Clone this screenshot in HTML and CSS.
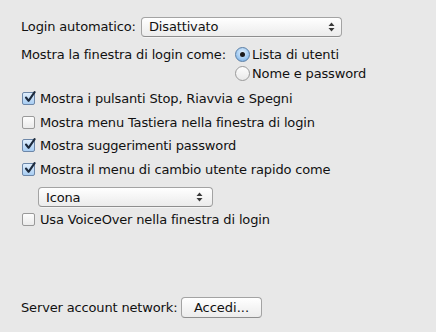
FILE: index.html
```html
<!DOCTYPE html>
<html>
<head>
<meta charset="utf-8">
<link rel="stylesheet" href="styles.css">
</head>
<body>
<div class="panel">
  <div class="row1">
    <span class="label1">Login automatico:</span>
    <div class="popup wide"><span>Disattivato</span><span class="arrows"><svg width="7" height="10" viewBox="0 0 7 10"><path d="M3.5 0.5 L6.5 4 L0.5 4 Z M0.5 6 L6.5 6 L3.5 9.5 Z" fill="#3a3a3a"/></svg></span></div>
  </div>
  <div class="row2">
    <span class="label2">Mostra la finestra di login come:</span>
    <div class="radios">
      <div class="radio-item"><span class="radio on"><span class="dot"></span></span><span>Lista di utenti</span></div>
      <div class="radio-item"><span class="radio"></span><span>Nome e password</span></div>
    </div>
  </div>
  <div class="checks">
    <div class="check-item"><span class="box on"><svg width="13" height="13" viewBox="0 0 13 13"><path d="M3 6.5 L5.6 9.8 L11.6 1.2" fill="none" stroke="#1c2a3c" stroke-width="2.1" stroke-linecap="round" stroke-linejoin="round"/></svg></span><span>Mostra i pulsanti Stop, Riavvia e Spegni</span></div>
    <div class="check-item"><span class="box"></span><span>Mostra menu Tastiera nella finestra di login</span></div>
    <div class="check-item"><span class="box on"><svg width="13" height="13" viewBox="0 0 13 13"><path d="M3 6.5 L5.6 9.8 L11.6 1.2" fill="none" stroke="#1c2a3c" stroke-width="2.1" stroke-linecap="round" stroke-linejoin="round"/></svg></span><span>Mostra suggerimenti password</span></div>
    <div class="check-item"><span class="box on"><svg width="13" height="13" viewBox="0 0 13 13"><path d="M3 6.5 L5.6 9.8 L11.6 1.2" fill="none" stroke="#1c2a3c" stroke-width="2.1" stroke-linecap="round" stroke-linejoin="round"/></svg></span><span>Mostra il menu di cambio utente rapido come</span></div>
    <div class="popup small"><span>Icona</span><span class="arrows"><svg width="7" height="10" viewBox="0 0 7 10"><path d="M3.5 0.5 L6.5 4 L0.5 4 Z M0.5 6 L6.5 6 L3.5 9.5 Z" fill="#3a3a3a"/></svg></span></div>
    <div class="check-item"><span class="box"></span><span>Usa VoiceOver nella finestra di login</span></div>
  </div>
  <div class="row-server">
    <span class="label3">Server account network:</span>
    <button class="btn">Accedi...</button>
  </div>
</div>
</body>
</html>
```
FILE: styles.css
```css
html, body {
  margin: 0;
  padding: 0;
  background: #e8e8e8;
}
body {
  font-family: "DejaVu Sans", "Liberation Sans", sans-serif;
  font-size: 13px;
  letter-spacing: -0.15px;
  color: #111;
  width: 436px;
  height: 332px;
  overflow: hidden;
}
.panel {
  padding: 16px 0 0 21px;
}
.row1 {
  display: flex;
  align-items: center;
  height: 21px;
}
.label1 {
  width: 120px;
  flex: none;
}
.popup {
  box-sizing: border-box;
  display: flex;
  align-items: center;
  justify-content: space-between;
  height: 20px;
  border: 1px solid #a3a3a3;
  border-bottom-color: #8e8e8e;
  border-radius: 4px;
  background: linear-gradient(#ffffff, #f3f3f3 60%, #ececec);
  box-shadow: 0 1px 0 rgba(255,255,255,0.5);
  padding: 0 6px 0 7px;
}
.popup .arrows {
  display: flex;
  align-items: center;
}
.popup.wide {
  width: 201px;
}
.popup.small {
  width: 175px;
  margin: 6px 0 0 16px;
  padding-right: 9px;
}
.row2 {
  display: flex;
  margin-top: 10px;
}
.label2 {
  width: 214px;
  flex: none;
  line-height: 15px;
}
.radios {
  display: flex;
  flex-direction: column;
  gap: 4px;
}
.radio-item {
  display: flex;
  align-items: center;
  height: 15px;
}
.radio {
  box-sizing: border-box;
  width: 15px;
  height: 15px;
  border-radius: 50%;
  border: 1px solid #9a9a9a;
  background: linear-gradient(#fdfdfd, #e9e9e9);
  margin-right: 2px;
  display: flex;
  align-items: center;
  justify-content: center;
  flex: none;
}
.radio.on {
  border-color: #5b7fa6;
  background: radial-gradient(circle at 50% 35%, #e4f1fd, #9ec8f0 60%, #6aa3dc);
}
.radio .dot {
  width: 5px;
  height: 5px;
  border-radius: 50%;
  background: #1a1a1a;
}
.checks {
  margin-top: 6px;
  margin-left: 1px;
  display: flex;
  flex-direction: column;
}
.check-item {
  display: flex;
  align-items: center;
  height: 23.5px;
}
.popup.small + .check-item {
  height: 25px;
}
.box {
  box-sizing: border-box;
  width: 13px;
  height: 13px;
  border: 1px solid #9a9a9a;
  border-radius: 2px;
  background: linear-gradient(#fdfdfd, #ebebeb);
  margin-right: 5px;
  flex: none;
  position: relative;
}
.box.on {
  border-color: #6d87a8;
  background: linear-gradient(#e0eefc, #a8cdf2);
}
.box svg {
  position: absolute;
  left: 0;
  top: -2px;
}
.row-server {
  display: flex;
  align-items: center;
  margin-top: 65px;
}
.label3 {
  width: 160px;
  flex: none;
}
.btn {
  box-sizing: border-box;
  width: 81px;
  height: 21px;
  font: inherit;
  color: #111;
  border: 1px solid #a3a3a3;
  border-bottom-color: #8e8e8e;
  border-radius: 4px;
  background: linear-gradient(#ffffff, #f3f3f3 60%, #ececec);
  padding: 0;
}
```
